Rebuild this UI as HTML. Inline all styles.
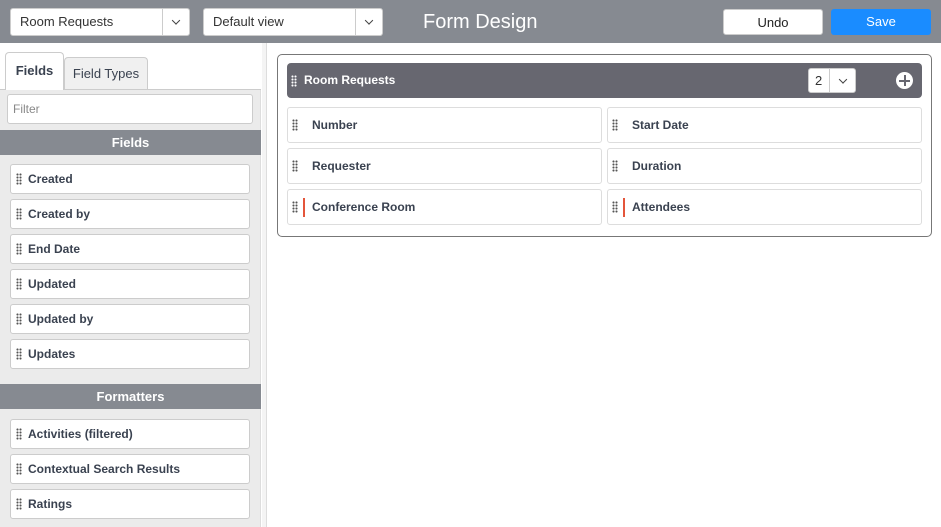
<!DOCTYPE html><html><head><style>
*{box-sizing:border-box;margin:0;padding:0}
body{width:941px;height:527px;overflow:hidden;font-family:"Liberation Sans",Arial,sans-serif;background:#fff;position:relative;color:#333}
.a{position:absolute}
.hdr{left:0;top:0;width:941px;height:43px;background:#868a91}
.sel{background:#fff;border:1px solid #ccc;border-radius:3px;height:28px;top:8px;font-size:13px;line-height:26px;padding-left:9px;color:#333}
.sel .c{position:absolute;right:0;top:0;width:27px;height:26px;border-left:1px solid #ccc}
.chev{position:absolute;left:50%;top:50%;width:6px;height:6px;border-right:1.6px solid #444;border-bottom:1.6px solid #444;transform:translate(-50%,-75%) rotate(45deg)}
.btn{top:9px;height:26px;border-radius:3px;font-size:13px;text-align:center;line-height:26px}
.side{left:0;top:43px;width:261px;height:484px;background:#ebebeb;border-right:1px solid #ddd}
.sep{left:262px;top:43px;width:5px;height:484px;background:#f4f4f4;border-right:1px solid #ddd}
.tabs{left:0;top:43px;width:261px;height:47px;background:#fff;border-bottom:1px solid #ccc}
.tab{border:1px solid #ccc;border-bottom:none;border-radius:4px 4px 0 0;font-size:13px;text-align:center;color:#3a4250}
.sh{left:0;width:261px;height:25px;background:#868a91;color:#fff;font-size:13px;font-weight:bold;text-align:center;line-height:25px}
.it{left:10px;width:240px;height:30px;background:#fff;border:1px solid #ccc;border-radius:3px;font-size:12px;font-weight:bold;line-height:28px;padding-left:17px;color:#3a4250}
.g{position:absolute;width:6px;height:12px;background:radial-gradient(circle,#555 0.9px,transparent 1.2px) 0 0/3px 3px}
.it .g{left:5px;top:8px}
.f{width:315px;height:36px;background:#fff;border:1px solid #ddd;border-radius:3px;font-size:12px;font-weight:bold;line-height:34px;padding-left:24px;color:#3a4250}
.f .g{left:4px;top:11px}
.red{position:absolute;left:15px;top:8px;width:2px;height:19px;background:#e4553b}
</style></head><body>
<div class="a hdr"></div>
<div class="a sel" style="left:10px;width:180px">Room Requests<div class="c"><div class="chev"></div></div></div>
<div class="a sel" style="left:203px;width:180px">Default view<div class="c"><div class="chev"></div></div></div>
<div class="a" style="left:423px;top:11px;font-size:20px;color:#fff">Form Design</div>
<div class="a btn" style="left:723px;width:100px;background:#fff;border:1px solid #ccc;color:#222">Undo</div>
<div class="a btn" style="left:831px;width:100px;background:#1a8cff;color:#fff">Save</div>

<div class="a side"></div>
<div class="a sep"></div>
<div class="a tabs"></div>
<div class="a tab" style="left:5px;top:52px;width:59px;height:38px;background:#fff;font-weight:bold;line-height:36px">Fields</div>
<div class="a tab" style="left:64px;top:57px;width:84px;height:32px;background:#f0f0f0;line-height:32px">Field Types</div>
<div class="a" style="left:7px;top:94px;width:246px;height:30px;background:#fff;border:1px solid #ccc;border-radius:3px;font-size:12px;color:#888;line-height:28px;padding-left:5px">Filter</div>
<div class="a sh" style="top:130px">Fields</div>
<div class="a it" style="top:164px"><span class="g"></span>Created</div>
<div class="a it" style="top:199px"><span class="g"></span>Created by</div>
<div class="a it" style="top:234px"><span class="g"></span>End Date</div>
<div class="a it" style="top:269px"><span class="g"></span>Updated</div>
<div class="a it" style="top:304px"><span class="g"></span>Updated by</div>
<div class="a it" style="top:339px"><span class="g"></span>Updates</div>
<div class="a sh" style="top:384px">Formatters</div>
<div class="a it" style="top:419px"><span class="g"></span>Activities (filtered)</div>
<div class="a it" style="top:454px"><span class="g"></span>Contextual Search Results</div>
<div class="a it" style="top:489px"><span class="g"></span>Ratings</div>

<div class="a" style="left:277px;top:54px;width:655px;height:183px;border:1px solid #777;border-radius:5px"></div>
<div class="a" style="left:287px;top:63px;width:635px;height:35px;background:#676770;border-radius:4px;color:#fff;font-size:12px;font-weight:bold;line-height:35px;padding-left:17px"><span class="g" style="left:4px;top:12px;background:radial-gradient(circle,#fff 0.9px,transparent 1.2px) 0 0/3px 3px"></span>Room Requests
<div class="a" style="left:521px;top:5px;width:48px;height:25px;background:#fff;border:1px solid #ccc;border-radius:3px;color:#333;font-weight:normal;font-size:13px;line-height:23px;padding-left:6px">2<div style="position:absolute;left:20px;top:0;width:26px;height:23px;border-left:1px solid #ccc"><div class="chev"></div></div></div>
<div class="a" style="left:609px;top:9px;width:17px;height:17px;border-radius:50%;background:#fff"><div class="a" style="left:3px;top:7.5px;width:11px;height:2px;background:#676770"></div><div class="a" style="left:7.5px;top:3px;width:2px;height:11px;background:#676770"></div></div>
</div>
<div class="a f" style="left:287px;top:107px"><span class="g"></span>Number</div>
<div class="a f" style="left:607px;top:107px"><span class="g"></span>Start Date</div>
<div class="a f" style="left:287px;top:148px"><span class="g"></span>Requester</div>
<div class="a f" style="left:607px;top:148px"><span class="g"></span>Duration</div>
<div class="a f" style="left:287px;top:189px"><span class="g"></span><span class="red"></span>Conference Room</div>
<div class="a f" style="left:607px;top:189px"><span class="g"></span><span class="red"></span>Attendees</div>
</body></html>
